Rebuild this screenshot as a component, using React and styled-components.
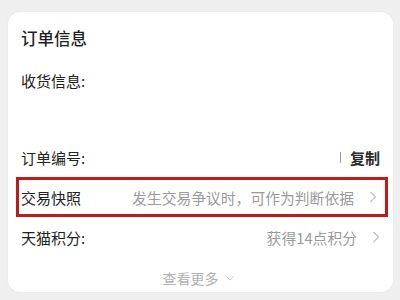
import styled, { createGlobalStyle } from 'styled-components';

const GlobalStyle = createGlobalStyle`
  html, body {
    margin: 0;
    padding: 0;
    background: #efefef;
    font-family: "Noto Sans CJK SC", "Noto Sans", sans-serif;
  }
`;

const Page = styled.div`
  width: 400px;
  height: 300px;
  box-sizing: border-box;
  padding: 12px 7px 8px 8px;
  overflow: hidden;
`;

const Card = styled.div`
  background: #fff;
  border-radius: 12px;
  box-shadow: 0 0 2px rgba(0, 0, 0, 0.06);
  padding: 0 13px;
  height: 280px;
  box-sizing: border-box;
  display: flex;
  flex-direction: column;
`;

const Title = styled.div`
  height: 52px;
  display: flex;
  align-items: center;
  font-size: 16.5px;
  font-weight: 500;
  color: #1f1f1f;
`;

const Row = styled.div`
  height: ${p => p.h || 40}px;
  display: flex;
  align-items: center;
  justify-content: space-between;
  font-size: 15px;
  color: #222;
  box-sizing: border-box;
  ${p => p.highlight && `
    border: 3px solid #c01a1c;
    margin: 0 -8px 0 -5px;
    padding: 0 8px 0 2px;
  `}
`;

const Blank = styled.div`
  height: 42px;
`;

const Value = styled.div`
  display: flex;
  align-items: center;
  gap: 15px;
  color: #9a9a9a;
  font-size: 14.8px;
`;

const Copy = styled.div`
  display: flex;
  align-items: center;
  gap: 9px;
  font-weight: 700;
  color: #2a2a2a;
  font-size: 15px;
  &::before {
    content: '';
    width: 1px;
    height: 11px;
    background: #999;
  }
`;

const More = styled.div`
  flex: 1;
  display: flex;
  align-items: center;
  justify-content: center;
  gap: 6px;
  padding-top: 6px;
  font-size: 14px;
  color: #b0b0b0;
  margin-left: -4px;
`;

function Chevron({ down }) {
  return down ? (
    <svg width="10" height="8" viewBox="0 0 10 8">
      <polyline points="1,2 5,6 9,2" fill="none" stroke="#c8c8c8" strokeWidth="1" />
    </svg>
  ) : (
    <svg width="8" height="12" viewBox="0 0 8 12">
      <polyline points="1.5,1 6.5,6 1.5,11" fill="none" stroke="#bdbdbd" strokeWidth="1.1" />
    </svg>
  );
}

export default function App() {
  return (
    <>
      <GlobalStyle />
      <Page>
        <Card>
          <Title>订单信息</Title>
          <Row h={32}>收货信息:</Row>
          <Blank />
          <Row h={39}>
            <span>订单编号:</span>
            <Copy>复制</Copy>
          </Row>
          <Row h={40} highlight>
            <span>交易快照</span>
            <Value>发生交易争议时，可作为判断依据<Chevron /></Value>
          </Row>
          <Row h={40}>
            <span>天猫积分:</span>
            <Value>获得14点积分<Chevron /></Value>
          </Row>
          <More>查看更多<Chevron down /></More>
        </Card>
      </Page>
    </>
  );
}
